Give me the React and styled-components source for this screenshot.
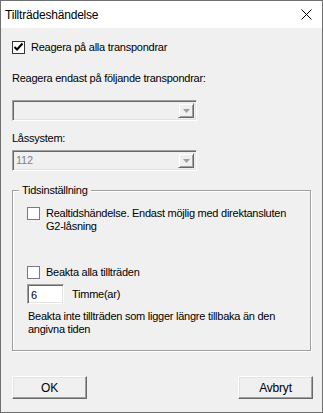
import React from "react";
import styled, { createGlobalStyle } from "styled-components";

const GlobalStyle = createGlobalStyle`
  html, body {
    margin: 0;
    padding: 0;
    background: #f0f0f0;
  }
  * {
    box-sizing: border-box;
  }
`;

const CheckBox = ({ checked }) => (
  <Box $checked={checked}>
    {checked && (
      <svg width="11" height="11" viewBox="0 0 11 11">
        <path d="M1.5 5 L4 7.5 L9.5 1.5" fill="none" stroke="#000" strokeWidth="2" />
      </svg>
    )}
  </Box>
);

const Combo = ({ value }) => (
  <ComboBox>
    <ComboText>{value}</ComboText>
    <DropButton>
      <svg width="7" height="4" viewBox="0 0 7 4">
        <path d="M0 0 H7 L3.5 4 Z" fill="#a0a0a0" />
      </svg>
    </DropButton>
  </ComboBox>
);

const App = () => {
  return (
    <>
      <GlobalStyle />
      <Window>
        <TitleBar>
          <Title>Tillträdeshändelse</Title>
          <CloseIcon>
            <svg width="11" height="11" viewBox="0 0 11 11">
              <path d="M0.5 0.5 L10.5 10.5 M10.5 0.5 L0.5 10.5" stroke="#000" strokeWidth="1" />
            </svg>
          </CloseIcon>
        </TitleBar>
        <Body>
          <CheckRow $top={13}>
            <CheckBox checked />
            <Label>Reagera på alla transpondrar</Label>
          </CheckRow>
          <Text $top={18}>Reagera endast på följande transpondrar:</Text>
          <Spacer $h={15} />
          <Combo value="" />
          <Text $top={11}>Låssystem:</Text>
          <Spacer $h={5} />
          <Combo value="112" />
          <GroupBox>
            <Legend>Tidsinställning</Legend>
            <CheckRow $top={0}>
              <CheckBox />
              <Label>
                Realtidshändelse. Endast möjlig med direktansluten
                <br />
                G2-låsning
              </Label>
            </CheckRow>
            <CheckRow $top={33}>
              <CheckBox />
              <Label>Beakta alla tillträden</Label>
            </CheckRow>
            <InputRow>
              <TextInput defaultValue="6" />
              <Label>Timme(ar)</Label>
            </InputRow>
            <Note>
              Beakta inte tillträden som ligger längre tillbaka än den
              <br />
              angivna tiden
            </Note>
          </GroupBox>
          <ButtonRow>
            <Button>OK</Button>
            <Button>Avbryt</Button>
          </ButtonRow>
        </Body>
      </Window>
    </>
  );
};

export default App;

const Window = styled.div`
  width: 323px;
  height: 413px;
  border: 1px solid #6f6f6f;
  background: #f0f0f0;
  display: flex;
  flex-direction: column;
  font-family: "Liberation Sans", Arial, sans-serif;
  font-size: 11px;
  letter-spacing: -0.25px;
  color: #000;
`;

const TitleBar = styled.div`
  height: 27px;
  background: #fff;
  display: flex;
  align-items: center;
  justify-content: space-between;
  padding: 0 10px 0 4px;
`;

const Title = styled.span`
  font-size: 12px;
  letter-spacing: -0.2px;
  line-height: 16px;
  padding-top: 1px;
`;

const CloseIcon = styled.span`
  display: flex;
  width: 11px;
  height: 11px;
`;

const Body = styled.div`
  flex: 1;
  display: flex;
  flex-direction: column;
  align-items: flex-start;
  padding: 0 11px 0 11px;
`;

const Spacer = styled.div`
  height: ${(p) => p.$h}px;
`;

const CheckRow = styled.div`
  display: flex;
  align-items: flex-start;
  gap: 6px;
  margin-top: ${(p) => p.$top}px;
`;

const Box = styled.span`
  flex: none;
  width: 13px;
  height: 13px;
  background: #fff;
  border: 1px solid ${(p) => (p.$checked ? "#333" : "#7a7a7a")};
  display: flex;
  align-items: center;
  justify-content: center;
`;

const Label = styled.span`
  line-height: 13px;
`;

const Text = styled.div`
  line-height: 13px;
  margin-top: ${(p) => p.$top}px;
`;

const ComboBox = styled.div`
  width: 185px;
  height: 21px;
  display: flex;
  align-items: stretch;
  border: 1px solid;
  border-color: #a0a0a0 #fff #fff #a0a0a0;
  box-shadow: inset 1px 1px #696969, inset -1px -1px #e3e3e3;
  background: #f0f0f0;
  padding: 2px;
`;

const ComboText = styled.span`
  flex: 1;
  color: #838383;
  line-height: 15px;
  padding-left: 1px;
`;

const DropButton = styled.span`
  width: 16px;
  display: flex;
  align-items: center;
  justify-content: center;
  border: 1px solid;
  border-color: #f0f0f0 #696969 #696969 #f0f0f0;
  box-shadow: inset 1px 1px #fff, inset -1px -1px #a0a0a0;
  padding-top: 1px;
`;

const GroupBox = styled.div`
  position: relative;
  width: 299px;
  margin-top: 19px;
  border: 1px solid #a0a0a0;
  box-shadow: 1px 1px 0 #fff, inset 1px 1px 0 #fff;
  padding: 16px 10px 14px 14px;
  display: flex;
  flex-direction: column;
  align-items: flex-start;
`;

const Legend = styled.span`
  position: absolute;
  top: -7px;
  left: 6px;
  padding: 0 3px;
  background: #f0f0f0;
  line-height: 13px;
`;

const InputRow = styled.div`
  display: flex;
  align-items: center;
  gap: 8px;
  margin-top: 5px;
`;

const TextInput = styled.input`
  width: 37px;
  height: 20px;
  margin: 0;
  padding: 1px 3px 0;
  font: inherit;
  color: #000;
  background: #fff;
  border: 1px solid;
  border-color: #a0a0a0 #fff #fff #a0a0a0;
  box-shadow: inset 1px 1px #696969, inset -1px -1px #e3e3e3;
  outline: none;
`;

const Note = styled.div`
  line-height: 13px;
  margin-top: 6px;
  padding-left: 1px;
`;

const ButtonRow = styled.div`
  width: 301px;
  margin-top: 25px;
  display: flex;
  justify-content: space-between;
`;

const Button = styled.button`
  width: 75px;
  height: 23px;
  margin: 0;
  padding: 0;
  font: inherit;
  font-size: 12px;
  letter-spacing: -0.2px;
  color: #000;
  background: #f0f0f0;
  border: 1px solid;
  border-color: #fff #696969 #696969 #fff;
  box-shadow: inset -1px -1px #a0a0a0, inset 1px 1px #e3e3e3;
`;
